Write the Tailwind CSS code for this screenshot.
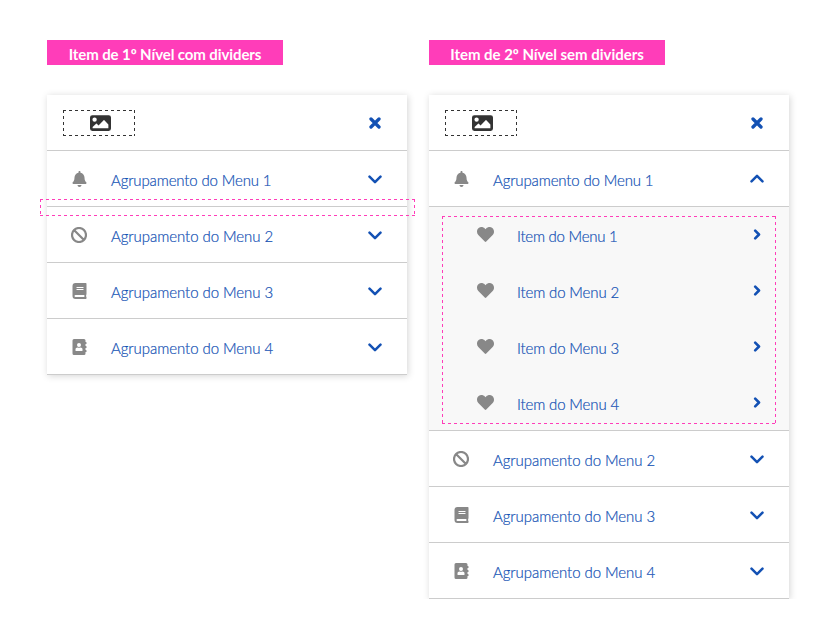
<!DOCTYPE html>
<html lang="pt-BR">
<head>
<meta charset="utf-8">
<title>Menu</title>
<script src="https://cdn.jsdelivr.net/npm/@tailwindcss/browser@4"></script>
</head>
<body class="bg-white font-[Lato,sans-serif] overflow-hidden">
<svg class="hidden">
  <symbol id="image" viewBox="0 0 512 384"><path fill-rule="evenodd" d="M56 0h400a56 56 0 0 1 56 56v272a56 56 0 0 1-56 56H56a56 56 0 0 1-56-56V56A56 56 0 0 1 56 0zM112 56a53 53 0 1 0 0 106a53 53 0 1 0 0-106zM64 320h384v-92L350 126q-9-9-18 0L208 252l-42-42q-9-9-18 0l-84 78z"/></symbol>
  <symbol id="close" viewBox="0 0 12 12"><path d="M2 2l8 8M10 2l-8 8" fill="none" stroke="currentColor" stroke-width="3.300" stroke-linecap="round"/></symbol>
  <symbol id="down" viewBox="0 0 14 9"><path d="M1.500 1.700L7 7.200l5.500-5.500" fill="none" stroke="currentColor" stroke-width="2.500" stroke-linecap="round" stroke-linejoin="round"/></symbol>
  <symbol id="right" viewBox="0 0 8 11"><path d="M2.200 1.700L6 5.500L2.200 9.300" fill="none" stroke="currentColor" stroke-width="2.600" stroke-linecap="round" stroke-linejoin="round"/></symbol>
  <symbol id="bell" viewBox="0 0 448 512"><path d="M224 512c35.320 0 63.970-28.650 63.970-64H160.030c0 35.350 28.650 64 63.970 64zm215.390-149.710c-19.320-20.760-55.470-51.990-55.470-154.290 0-77.700-54.480-139.900-127.940-155.160V32c0-17.670-14.320-32-31.980-32s-31.980 14.330-31.980 32v20.840C118.560 68.100 64.080 130.300 64.080 208c0 102.300-36.150 133.530-55.470 154.290-6 6.450-8.660 14.160-8.610 21.710.11 16.400 12.980 32 32.100 32h383.800c19.120 0 32-15.600 32.100-32 .05-7.550-2.610-15.270-8.610-21.710z"/></symbol>
  <symbol id="ban" viewBox="0 0 16 16"><path d="M3 3l10 10M15 8A7 7 0 1 1 1 8A7 7 0 0 1 15 8z" fill="none" stroke="currentColor" stroke-width="2.200"/></symbol>
  <symbol id="book" viewBox="0 0 448 512"><path fill-rule="evenodd" d="M96 0h328q24 0 24 24v336q0 12-9 18-7 29 0 59 9 8 9 19v32q0 24-24 24H96A96 96 0 0 1 0 416V96A96 96 0 0 1 96 0zM134 128q-6 0-6 6v20q0 6 6 6h212q6 0 6-6v-20q0-6-6-6zM134 192q-6 0-6 6v20q0 6 6 6h212q6 0 6-6v-20q0-6-6-6zM96 384a32 32 0 0 0 0 64h285q-4-32 0-64z"/></symbol>
  <symbol id="contact" viewBox="0 0 448 512"><path fill-rule="evenodd" d="M48 0h320a48 48 0 0 1 48 48v416a48 48 0 0 1-48 48H48a48 48 0 0 1-48-48V48A48 48 0 0 1 48 0zM208 128a64 64 0 1 0 0 128a64 64 0 1 0 0-128zM163 272c-38 0-67 26-67 58v35q0 19 22 19h180q22 0 22-19v-35c0-32-29-58-67-58q-45 16-90 0zM416 96h20q12 0 12 12v40q0 12-12 12h-20zM416 224h20q12 0 12 12v40q0 12-12 12h-20zM416 352h20q12 0 12 12v40q0 12-12 12h-20z"/></symbol>
  <symbol id="heart" viewBox="0 0 512 448"><path d="M462.300 30.600C407.500-16.100 326-7.700 275.700 44.200L256 64.500l-19.700-20.300C186.100-7.700 104.500-16.100 49.700 30.600c-62.800 53.500-66.100 149.700-9.900 207.800l193.500 199.800c12.500 12.900 32.800 12.900 45.300 0l193.500-199.800c56.300-58.100 53-154.300-9.800-207.800z"/></symbol>
</svg>

<main class="flex items-start gap-[22px] pl-[47px] pt-10">
  <section class="w-[360px]">
    <h1 class="flex h-[25px] w-[236px] items-center justify-center bg-[#ff3db9] pt-[3px] text-[15px] font-bold text-white"><span class="whitespace-nowrap tracking-[-0.1px]">Item de 1º Nível com dividers</span></h1>
    <div class="relative mt-[30px] bg-white shadow-[1px_1px_7px_rgba(0,0,0,0.17)]">
      <header class="flex h-14 items-center justify-between border-b border-[#ccc] pl-4 pr-[26px]">
        <div class="relative flex h-[26px] w-[72px] items-center justify-center text-[#333]">
          <svg class="absolute inset-0 size-full"><path d="M0 .5H72M0 25.500H72M.5 0V26M71.500 0V26" fill="none" stroke="currentColor" stroke-dasharray="3 3"/></svg>
          <svg class="ml-[2px] h-4 w-[21px]" fill="currentColor"><use href="#image"/></svg>
        </div>
        <svg class="size-3 text-[#1351b4]"><use href="#close"/></svg>
      </header>
      <nav data-menu="plain"></nav>
      <svg class="absolute -left-[7px] top-[104px] h-[17px] w-[375px]"><path d="M0 .5H375M0 16.500H375M.5 0V17M374.500 0V17" fill="none" stroke="#ff3db9" stroke-dasharray="3 3"/></svg>
    </div>
  </section>

  <section class="w-[360px]">
    <h1 class="flex h-[25px] w-[236px] items-center justify-center bg-[#ff3db9] pt-[3px] text-[15px] font-bold text-white"><span class="whitespace-nowrap tracking-[-0.03px]">Item de 2º Nível sem dividers</span></h1>
    <div class="relative mt-[30px] bg-white shadow-[1px_1px_7px_rgba(0,0,0,0.17)]">
      <header class="flex h-14 items-center justify-between border-b border-[#ccc] pl-4 pr-[26px]">
        <div class="relative flex h-[26px] w-[72px] items-center justify-center text-[#333]">
          <svg class="absolute inset-0 size-full"><path d="M0 .5H72M0 25.500H72M.5 0V26M71.500 0V26" fill="none" stroke="currentColor" stroke-dasharray="3 3"/></svg>
          <svg class="ml-[2px] h-4 w-[21px]" fill="currentColor"><use href="#image"/></svg>
        </div>
        <svg class="size-3 text-[#1351b4]"><use href="#close"/></svg>
      </header>
      <nav data-menu="open"></nav>
      <svg class="absolute left-[13px] top-[121px] h-[208px] w-[334px]"><path d="M0 .5H334M0 207.500H334M.5 0V208M333.500 0V208" fill="none" stroke="#ff3db9" stroke-dasharray="3 3"/></svg>
    </div>
  </section>
</main>

<script>
const icons = ['bell', 'ban', 'book', 'contact'];
const group = (n, open) => `<a class="flex h-14 items-center border-b border-[#ccc] pl-4 pr-[25px] text-[15px] text-[#1351b4]">
  <span class="flex w-8 justify-center text-[#888]"><svg class="${n === 2 ? 'size-4' : 'h-4 w-[15px]'}" preserveAspectRatio="none" fill="currentColor"><use href="#${icons[n - 1]}"/></svg></span>
  <span class="ml-4 mt-[3px] whitespace-nowrap font-light [-webkit-text-stroke:0.2px_#1351b4] ${n === 1 ? 'tracking-[-0.14px]' : 'tracking-[-0.06px]'}">Agrupamento do Menu ${n}</span>
  <svg class="ml-auto h-[9px] w-[14px] ${open ? 'rotate-180' : 'mt-px'}"><use href="#down"/></svg></a>`;
const item = n => `<a class="flex h-14 items-center pl-10 pr-7 text-[15px] text-[#1351b4]">
  <span class="flex w-8 justify-center text-[#888]"><svg class="mb-px h-[15px] w-[17px]" fill="currentColor"><use href="#heart"/></svg></span>
  <span class="ml-4 mt-[3px] whitespace-nowrap font-light [-webkit-text-stroke:0.2px_#1351b4] ${n === 1 ? 'tracking-[-0.24px]' : 'tracking-[-0.14px]'}">Item do Menu ${n}</span>
  <svg class="mb-px ml-auto h-[11px] w-2"><use href="#right"/></svg></a>`;
document.querySelector('[data-menu=plain]').innerHTML = [1, 2, 3, 4].map(n => group(n)).join('');
document.querySelector('[data-menu=open]').innerHTML = group(1, true)
  + `<div class="h-[224px] border-b border-[#ccc] bg-[#f8f8f8]">${[1, 2, 3, 4].map(item).join('')}</div>`
  + [2, 3, 4].map(n => group(n)).join('');
</script>
</body>
</html>
